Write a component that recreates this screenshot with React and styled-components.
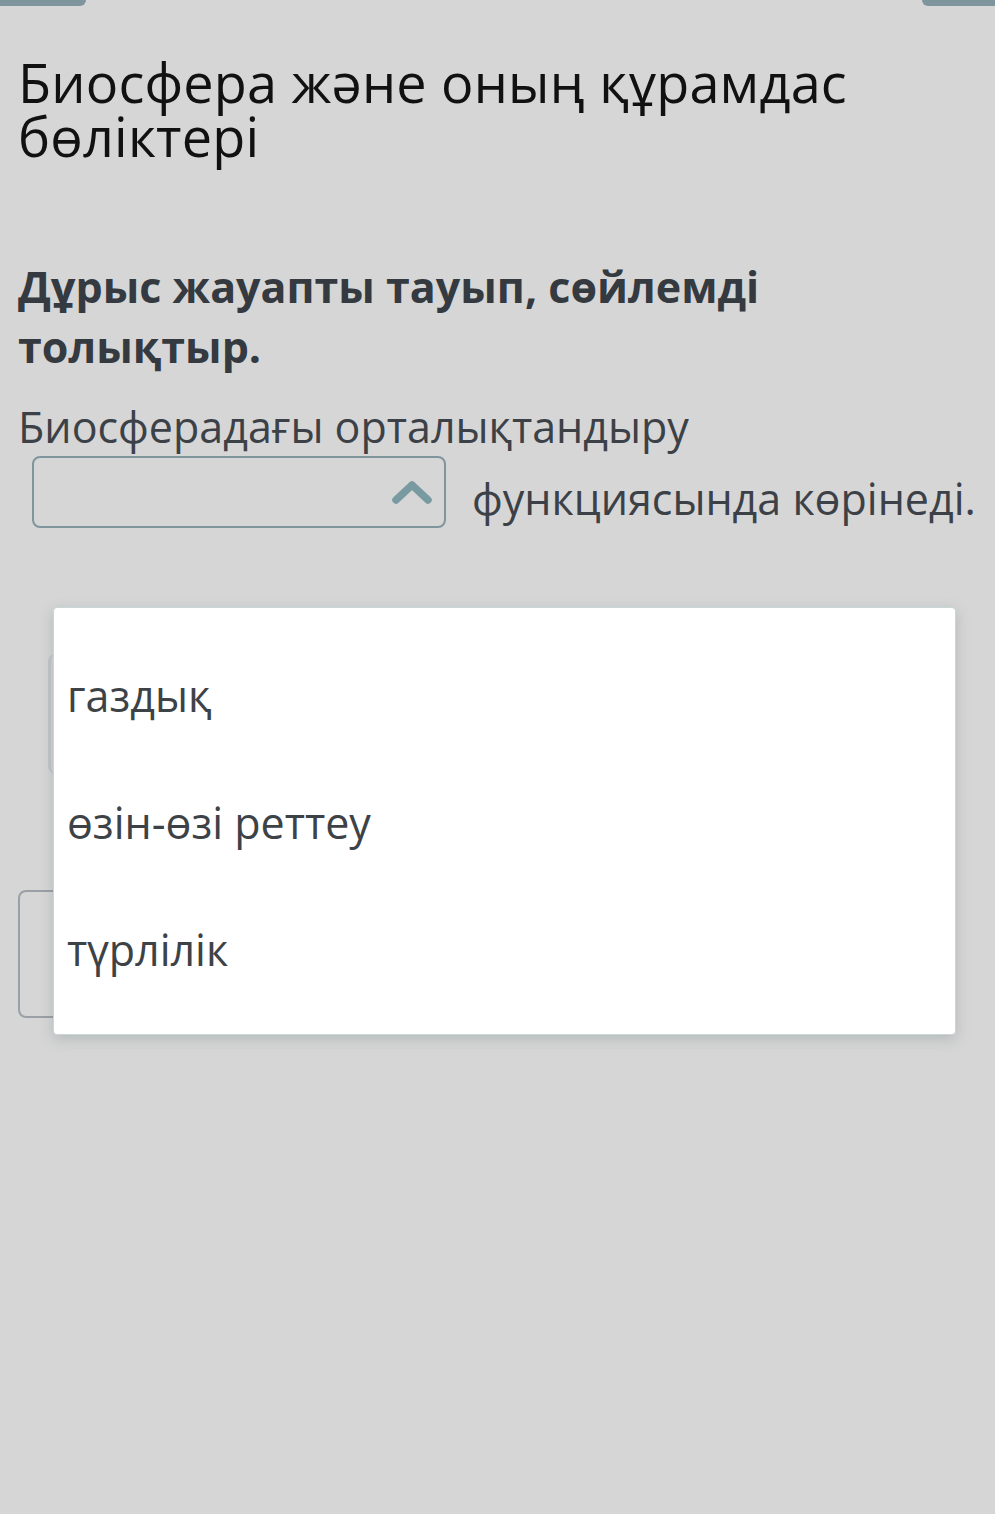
import React from 'react';
import styled, { createGlobalStyle } from 'styled-components';

const GlobalStyle = createGlobalStyle`
  html, body {
    margin: 0;
    padding: 0;
    background: #d6d6d6;
  }
  body {
    font-family: 'Open Sans', 'Noto Sans', sans-serif;
  }
`;

const Page = styled.div`
  position: relative;
  min-height: 1514px;
  background: #d6d6d6;
  overflow: hidden;
`;

const TopBar = styled.div`
  display: flex;
  justify-content: space-between;
  height: 6px;
`;

const Tab = styled.div`
  width: ${(p) => p.width}px;
  height: 6px;
  background: #7f959e;
  border-radius: ${(p) => (p.right ? '0 0 0 8px' : '0 0 8px 0')};
`;

const Content = styled.main`
  padding: 0 18px;
`;

const Title = styled.h1`
  margin: 49px 0 0 0;
  font-weight: 400;
  font-size: 54px;
  line-height: 54px;
  color: #111;
  letter-spacing: 0.2px;
`;

const Instruction = styled.h2`
  margin: 94px 0 0 0;
  font-weight: 700;
  font-size: 43px;
  line-height: 60px;
  color: #343a40;
`;

const Sentence = styled.div`
  margin-top: 22px;
  font-size: 43px;
  line-height: 56px;
  color: #3c4147;
`;

const SentenceRow = styled.div`
  display: flex;
  align-items: center;
  gap: 26px;
  margin-top: 1px;
  padding-left: 14px;
`;

const Select = styled.div`
  box-sizing: border-box;
  width: 414px;
  height: 72px;
  border: 2px solid #7f979c;
  border-radius: 8px;
  display: flex;
  align-items: center;
  justify-content: flex-end;
  padding-right: 12px;
`;

const Tail = styled.span`
  padding-top: 14px;
`;

const BehindCard = styled.div`
  box-sizing: border-box;
  margin: 126px 35px 0 30px;
  height: 120px;
  border-left: 3px solid #c2c6c9;
  border-right: 3px solid #c2c6c9;
  border-radius: 8px;
`;

const BehindButton = styled.div`
  box-sizing: border-box;
  margin-top: 116px;
  width: 300px;
  height: 128px;
  border: 2px solid #9aa0a5;
  border-radius: 8px;
`;

const Dropdown = styled.ul`
  position: absolute;
  left: 53px;
  top: 607px;
  width: 903px;
  height: 428px;
  box-sizing: border-box;
  margin: 0;
  padding: 60px 0 0 0;
  list-style: none;
  background: #fff;
  border: 1px solid #c9d6d8;
  border-radius: 4px;
  box-shadow: 0 4px 14px rgba(80, 100, 105, 0.25);
`;

const Option = styled.li`
  padding: 0 13px;
  height: 127px;
  font-size: 43px;
  line-height: 56px;
  color: #3d4247;
`;

function ChevronUp() {
  return (
    <svg width="40" height="28" viewBox="0 0 40 28">
      <path
        d="M4 22 L20 7 L36 22"
        fill="none"
        stroke="#7a9aa2"
        strokeWidth="7.5"
        strokeLinecap="round"
        strokeLinejoin="round"
      />
    </svg>
  );
}

const options = ['газдық', 'өзін-өзі реттеу', 'түрлілік'];

export default function App() {
  return (
    <Page>
      <GlobalStyle />
      <TopBar>
        <Tab width={86} />
        <Tab width={73} right />
      </TopBar>
      <Content>
        <Title>Биосфера және оның құрамдас бөліктері</Title>
        <Instruction>Дұрыс жауапты тауып, сөйлемді толықтыр.</Instruction>
        <Sentence>
          Биосферадағы орталықтандыру
          <SentenceRow>
            <Select>
              <ChevronUp />
            </Select>
            <Tail>функциясында көрінеді.</Tail>
          </SentenceRow>
        </Sentence>
        <BehindCard />
        <BehindButton />
      </Content>
      <Dropdown>
        {options.map((o) => (
          <Option key={o}>{o}</Option>
        ))}
      </Dropdown>
    </Page>
  );
}
